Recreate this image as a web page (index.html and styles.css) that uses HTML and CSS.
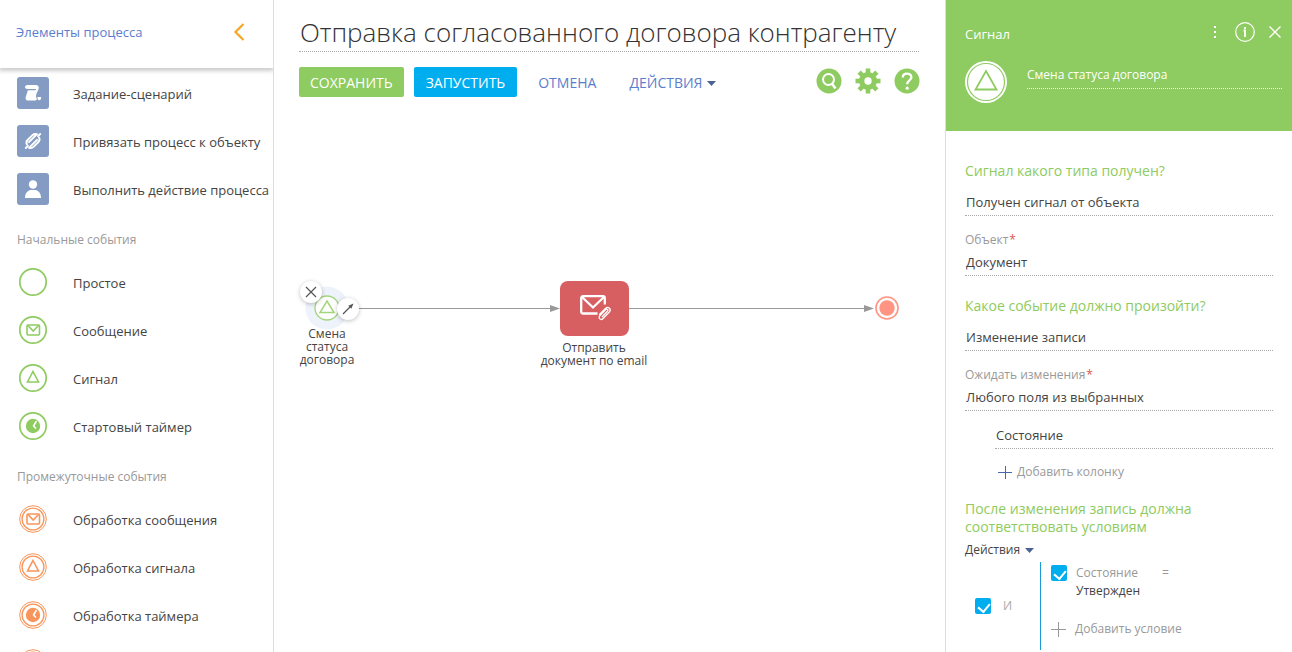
FILE: index.html
```html
<!DOCTYPE html>
<html lang="ru">
<head>
<meta charset="utf-8">
<title>Отправка согласованного договора контрагенту</title>
<link rel="stylesheet" href="styles.css">
</head>
<body>
<svg class="defs" aria-hidden="true">
  <symbol id="ring" viewBox="0 0 32 32"><circle cx="16" cy="16" r="13.200" fill="none" stroke="currentColor" stroke-width="1.700"/></symbol>
  <symbol id="ring2" viewBox="0 0 32 32"><g fill="none" stroke="currentColor"><circle cx="16" cy="16" r="13.300" stroke-width="1"/><circle cx="16" cy="16" r="10.900" stroke-width="1.300"/></g></symbol>
  <symbol id="mail" viewBox="0 0 32 32"><g fill="none" stroke="currentColor" stroke-width="1.600"><rect x="10" y="11" width="12.500" height="10" rx="1"/><path d="M11 11.500l5.200 5.500 5.300-5.500"/></g></symbol>
  <symbol id="tri" viewBox="0 0 32 32"><path d="M16 9.500L21.500 20h-11z" fill="none" stroke="currentColor" stroke-width="1.600"/></symbol>
  <symbol id="clock" viewBox="0 0 32 32"><circle cx="16" cy="16" r="7.200" fill="currentColor"/><path d="M19.500 11L16.500 16l2.500 2.500" fill="none" stroke="#fff" stroke-width="1.500"/></symbol>
</svg>

<div class="app">
  <aside class="sidebar">
    <header class="sidebar-head">
      <h2 class="sidebar-title">Элементы процесса</h2>
      <button class="icon-btn collapse" aria-label="Свернуть">
        <svg width="12" height="20" viewBox="0 0 12 20"><path d="M10.500 2L2.500 10l8 8" fill="none" stroke="#f5a623" stroke-width="2.200"/></svg>
      </button>
    </header>
    <div class="palette">
      <ul class="group">
        <li class="item"><span class="tile"><svg width="32" height="32" viewBox="0 0 32 32"><g fill="#fff"><path d="M10.500 8H19v4h-8.500c-3.300 0-3.300-4 0-4z"/><path d="M18 8c3.300 0 4.500 1.800 3.500 4.200l-1.800 4c-.9 2-.8 3.800 0 5.300.4 1-.2 2-1.500 2h-7c-2.600 0-3-2-2.300-4l2-6.300h7z"/><path d="M20.500 20h3.600c.3 2.200-.7 3.300-2 3.300s-1.800-1.500-1.600-3.300z"/></g><path d="M10.500 12.500H19" stroke="#849cc3" stroke-width="1"/></svg></span><span class="name">Задание-сценарий</span></li>
        <li class="item"><span class="tile"><svg width="32" height="32" viewBox="0 0 32 32"><g fill="none" stroke="#fff" stroke-width="1.900" stroke-linecap="round" stroke-linejoin="round"><path d="M10 19.500c-1.200-2-.4-3.500.6-4.500l4.900-4.900c1.200-1.200 2.500-1.500 4.500-.9l-8 8"/><path d="M22 12.500c1.200 2 .4 3.500-.6 4.500l-4.900 4.900c-1.200 1.200-2.500 1.500-4.500.9l8-8"/><path d="M8.800 23l2.200-2.200M23.200 9L21 11.200"/></g></svg></span><span class="name">Привязать процесс к объекту</span></li>
        <li class="item"><span class="tile"><svg width="32" height="32" viewBox="0 0 32 32"><circle cx="16" cy="11.500" r="4.200" fill="#fff"/><path d="M8 25c0-5 2.500-7 5-8h6c2.500 1 5 3 5 8z" fill="#fff"/></svg></span><span class="name">Выполнить действие процесса</span></li>
      </ul>
      <h3 class="group-title">Начальные события</h3>
      <ul class="group start">
        <li class="item"><svg class="event"><use href="#ring"/></svg><span class="name">Простое</span></li>
        <li class="item"><svg class="event"><use href="#ring"/><use href="#mail"/></svg><span class="name">Сообщение</span></li>
        <li class="item"><svg class="event"><use href="#ring"/><use href="#tri"/></svg><span class="name">Сигнал</span></li>
        <li class="item"><svg class="event"><use href="#ring"/><use href="#clock"/></svg><span class="name">Стартовый таймер</span></li>
      </ul>
      <h3 class="group-title">Промежуточные события</h3>
      <ul class="group middle">
        <li class="item"><svg class="event"><use href="#ring2"/><use href="#mail"/></svg><span class="name">Обработка сообщения</span></li>
        <li class="item"><svg class="event"><use href="#ring2"/><use href="#tri"/></svg><span class="name">Обработка сигнала</span></li>
        <li class="item"><svg class="event"><use href="#ring2"/><use href="#clock"/></svg><span class="name">Обработка таймера</span></li>
        <li class="item"><svg class="event"><use href="#ring2"/></svg></li>
      </ul>
    </div>
  </aside>

  <main class="main">
    <input class="title" type="text" aria-label="Название процесса" value="Отправка согласованного договора контрагенту">
    <div class="toolbar">
      <button class="btn save">СОХРАНИТЬ</button>
      <button class="btn run">ЗАПУСТИТЬ</button>
      <button class="btn flat cancel">ОТМЕНА</button>
      <button class="btn flat">ДЕЙСТВИЯ<svg class="caret" width="9" height="5" viewBox="0 0 9 5"><path d="M0 0h9L4.500 5z" fill="#4a6394"/></svg></button>
      <div class="tools">
        <button class="icon-btn" aria-label="Поиск"><svg width="26" height="26" viewBox="0 0 26 26"><circle cx="13" cy="13" r="12.500" fill="#8ecb60"/><circle cx="12.500" cy="11.500" r="5.500" fill="none" stroke="#fff" stroke-width="2"/><path d="M15.500 15l4 5.500" stroke="#fff" stroke-width="2.600"/></svg></button>
        <button class="icon-btn" aria-label="Настройки"><svg width="26" height="26" viewBox="0 0 26 26"><g fill="#8ecb60"><circle cx="13" cy="13" r="9"/><g id="teeth"><rect x="10.700" y="0.500" width="4.600" height="25"/><rect x="0.500" y="10.700" width="25" height="4.600"/></g><use href="#teeth" transform="rotate(45 13 13)"/></g><circle cx="13" cy="13" r="3.700" fill="#fff"/></svg></button>
        <button class="icon-btn" aria-label="Справка"><svg width="26" height="26" viewBox="0 0 26 26"><circle cx="13" cy="13" r="12.500" fill="#8ecb60"/><path d="M8.800 9.500c0-5.200 8.600-5 8.600-.3 0 3.300-4.200 3.200-4.200 7" fill="none" stroke="#fff" stroke-width="2.300"/><circle cx="13.200" cy="20.200" r="1.600" fill="#fff"/></svg></button>
      </div>
    </div>
    <div class="canvas">
      <svg class="flows" aria-hidden="true">
        <g stroke="#999" stroke-width="1"><path d="M84 211.500h193"/><path d="M355 211.500h236"/></g>
        <g fill="#999"><path d="M276 208l10 3.500-10 3.500z"/><path d="M590 208l10 3.500-10 3.500z"/></g>
      </svg>
      <div class="node signal">
        <svg width="44" height="44" viewBox="0 0 44 44"><circle cx="22" cy="22" r="21.500" fill="#eef2fb"/><circle cx="22" cy="22" r="12" fill="#fff" stroke="#a3d57c" stroke-width="1.300"/><path d="M22 15l7 11.500h-14z" fill="none" stroke="#a3d57c" stroke-width="1.500"/></svg>
        <span class="caption">Смена<br>статуса<br>договора</span>
      </div>
      <button class="bubble remove" aria-label="Удалить"><svg width="22" height="22" viewBox="0 0 22 22"><path d="M6 6l10 10M16 6L6 16" stroke="#555" stroke-width="1.200"/></svg></button>
      <button class="bubble link" aria-label="Соединить"><svg width="22" height="22" viewBox="0 0 22 22"><path d="M6 16L13 9" stroke="#555" stroke-width="1.200"/><path d="M16.500 5.500l-2.200 5.200-3-3z" fill="#555"/></svg></button>
      <div class="node task">
        <div class="task-box"><svg width="40" height="34" viewBox="0 0 40 34"><g fill="none" stroke="#fff"><path d="M21.500 22.500H7a1.800 1.800 0 0 1-1.800-1.800V7A1.800 1.800 0 0 1 7 5.200h20a1.800 1.800 0 0 1 1.800 1.800v6.500M6 6l11 10.500L28 6" stroke-width="2.300"/><path d="M26 26l5.500-5.800c1.200-1.200-.5-2.800-1.700-1.600l-6 6.200c-2 2.300 1 5 3.300 2.700l6.200-6.500c2.500-3-1-6-3.600-3.700l-6.500 6.500" stroke-width="1.300"/></g></svg></div>
        <span class="caption">Отправить<br>документ по email</span>
      </div>
      <svg class="node end" width="26" height="26" viewBox="0 0 26 26"><circle cx="13" cy="13" r="11" fill="#fff" stroke="#ff9482" stroke-width="1.600"/><circle cx="13" cy="13" r="7.700" fill="#ff9482"/></svg>
    </div>
  </main>

  <aside class="panel">
    <header class="panel-head">
      <div class="panel-top">
        <h2 class="panel-title">Сигнал</h2>
        <button class="icon-btn" aria-label="Меню"><svg width="4" height="20" viewBox="0 0 4 20"><g fill="#fff"><rect x="1" y="4" width="2" height="2"/><rect x="1" y="9" width="2" height="2"/><rect x="1" y="14" width="2" height="2"/></g></svg></button>
        <button class="icon-btn info" aria-label="Информация"><svg width="20" height="20" viewBox="0 0 20 20"><circle cx="10" cy="10" r="9.300" fill="none" stroke="#fff" stroke-width="1.200"/><path d="M8.500 8.500H10v6.500M10 5v2" fill="none" stroke="#fff" stroke-width="1.800"/></svg></button>
        <button class="icon-btn" aria-label="Закрыть"><svg width="14" height="14" viewBox="0 0 14 14"><path d="M1.500 1.500l11 11M12.500 1.500l-11 11" stroke="#fff" stroke-width="1.300"/></svg></button>
      </div>
      <div class="panel-name">
        <svg width="42" height="42" viewBox="0 0 42 42"><circle cx="21" cy="21" r="21" fill="#fff"/><circle cx="21" cy="21" r="18.500" fill="none" stroke="#8ecb60" stroke-width="1.200"/><path d="M21 10l10.500 18.500h-21z" fill="none" stroke="#8ecb60" stroke-width="1.800"/></svg>
        <input class="name-input" type="text" aria-label="Заголовок" value="Смена статуса договора">
      </div>
    </header>
    <form class="panel-body">
      <label class="question" for="kind">Сигнал какого типа получен?</label>
      <input class="field" id="kind" type="text" value="Получен сигнал от объекта">
      <label class="label" for="object">Объект<span class="req">*</span></label>
      <input class="field" id="object" type="text" value="Документ">
      <label class="question next" for="event">Какое событие должно произойти?</label>
      <input class="field" id="event" type="text" value="Изменение записи">
      <label class="label" for="wait">Ожидать изменения<span class="req">*</span></label>
      <input class="field" id="wait" type="text" value="Любого поля из выбранных">
      <div class="columns">
        <input class="field" type="text" aria-label="Колонка" value="Состояние">
        <button class="add" type="button"><svg width="14" height="14" viewBox="0 0 14 14"><path d="M0 7.500h14M7.500 1v13" stroke="#4a66ad" stroke-width="1"/></svg>Добавить колонку</button>
      </div>
      <h3 class="question filter-title">После изменения запись должна соответствовать условиям</h3>
      <button class="filter-actions" type="button">Действия<svg class="caret" width="9" height="5" viewBox="0 0 9 5"><path d="M0 0h9L4.500 5z" fill="#4a6394"/></svg></button>
      <div class="filter">
        <label class="logic"><input class="check" type="checkbox" checked>И</label>
        <div class="conditions">
          <div class="condition">
            <input class="check" id="cond" type="checkbox" checked>
            <label class="cond-text" for="cond"><span class="cond-col">Состояние</span><span class="cond-op">=</span><span class="cond-value">Утвержден</span></label>
          </div>
          <button class="add add-cond" type="button"><svg width="15" height="15" viewBox="0 0 15 15"><path d="M0 7.500h15M7.500 0v15" stroke="#999" stroke-width="1"/></svg>Добавить условие</button>
        </div>
      </div>
    </form>
  </aside>
</div>
</body>
</html>
```

FILE: styles.css
```css
* { box-sizing: border-box; }
body, h2, h3, ul { margin: 0; padding: 0; }
body { font: 13px/18px "Open Sans", "Noto Sans", sans-serif; color: #444; background: #fff; }
h2, h3 { font-weight: 400; }
ul { list-style: none; }
svg { display: block; flex: none; }
button, input { font: inherit; color: inherit; background: none; border: 0; border-radius: 0; padding: 0; margin: 0; outline: 0; min-width: 0; }
button { cursor: pointer; }
.defs { position: absolute; width: 0; height: 0; }

.app { display: grid; grid-template-columns: 274px minmax(0, 1fr) 347px; height: 100vh; overflow: hidden; }

/* Element palette */
.sidebar { display: flex; flex-direction: column; border-right: 1px solid #ddd; min-height: 0; overflow: hidden; }
.sidebar-head { display: flex; align-items: center; justify-content: space-between; flex: none; height: 68px; padding: 0 28px 4px 16px; margin-bottom: 1px; box-shadow: 0 2px 4px 1px rgba(0, 0, 0, .2); }
.sidebar-title { font-size: 13px; color: #5c7dcc; }
.palette { flex: 1; min-height: 0; overflow: hidden; white-space: nowrap; }
.item { display: flex; align-items: center; gap: 24px; height: 48px; padding: 0 0 0 17px; }
.name { padding-top: 2px; }
.tile { width: 32px; height: 32px; border-radius: 3px; background: #849cc3; }
.event { width: 32px; height: 32px; }
.start .event { color: #8ecb60; }
.middle .event { color: #f8955a; }
.group-title { padding: 18px 17px 9px; font-size: 12px; color: #999; }

/* Designer */
.main { display: flex; flex-direction: column; min-height: 0; overflow: hidden; }
.title { height: 40px; margin: 12px 26px 0 25px; padding-left: 1px; font-size: 26px; font-weight: 300; color: #333; border-bottom: 1px dotted #aaa; }
.toolbar { display: flex; align-items: center; height: 30px; margin: 15px 25px 0 25px; font-size: 14px; flex: none; }
.btn { display: flex; align-items: center; height: 30px; padding-top: 2px; white-space: nowrap; }
.save, .run { padding: 2px 11px 0; border-radius: 2px; color: #fff; }
.save { background: #8ecb60; margin-right: 10px; }
.run { background: #00aeef; padding: 2px 12px 0; }
.flat { color: #5c7dcc; }
.cancel { margin: 0 33px 0 21px; }
.caret { margin-left: 5px; }
.tools { display: flex; gap: 13px; margin-left: auto; padding-bottom: 2px; }
.canvas { position: relative; flex: 1; min-height: 0; font-size: 12px; line-height: 13px; text-align: center; }
.flows { position: absolute; left: 0; top: 0; width: 100%; height: 100%; }
.node { position: absolute; }
.caption { display: block; white-space: nowrap; }
.signal { left: 13px; top: 189px; width: 80px; }
.signal svg { margin: 0 auto; }
.signal .caption { margin-top: -3px; }
.bubble { position: absolute; width: 22px; height: 22px; border-radius: 50%; background: #fff; box-shadow: 0 1px 4px rgba(0, 0, 0, .25); }
.remove { left: 26px; top: 184px; }
.link { left: 63px; top: 201px; }
.task { left: 260px; top: 184px; width: 120px; }
.task-box { width: 69px; height: 55px; margin: 0 auto 5px; padding: 10px 0 0 16px; border-radius: 8px; background: #d85f61; }
.end { left: 600px; top: 198px; }

/* Element properties */
.panel { border-left: 1px solid #ddd; min-height: 0; overflow: hidden; }
.panel-head { height: 131px; padding: 22px 10px 0 19px; background: #8ecb60; color: #fff; }
.panel-top { display: flex; align-items: center; height: 20px; }
.panel-title { flex: 1; font-size: 13px; padding-top: 4px; }
.info { margin: 0 13px 0 18px; }
.panel-name { display: flex; gap: 20px; margin-top: 19px; }
.name-input { flex: 1; height: 28px; padding-bottom: 1px; font-size: 12px; border-bottom: 1px dotted #fff; }
.panel-body { display: flex; flex-direction: column; padding: 31px 19px 0; }
.question { font-size: 14px; color: #8ecb60; }
.question.next { margin-top: 21px; }
.field { height: 26px; padding: 0 1px 2px; border-bottom: 1px dotted #aaa; }
.question + .field { margin-top: 10px; }
.label { margin: 15px 0 1px; font-size: 12px; color: #999; }
.req { margin-left: 1px; color: #e0564f; }
.columns { display: flex; flex-direction: column; align-items: stretch; margin: 12px 0 0 30px; }
.add { display: flex; align-items: center; gap: 5px; font-size: 12px; color: #999; }
.columns .add { margin: 14px 0 0 3px; align-self: flex-start; }
.filter-title { margin-top: 19px; }
.filter-actions { display: flex; align-items: center; align-self: flex-start; margin-top: 5px; font-size: 12px; }
.filter { display: grid; grid-template-columns: 75px 1fr; margin-top: 3px; font-size: 12px; }
.logic { display: flex; align-items: center; gap: 12px; padding-left: 10px; color: #aaa; }
.check { appearance: none; flex: none; width: 16px; height: 16px; border-radius: 2px; background: #00aeef; position: relative; }
.check:checked::after { content: ""; position: absolute; left: 5px; top: 3px; width: 6px; height: 9px; border: solid #fff; border-width: 0 2px 2px 0; transform: rotate(40deg); }
.conditions { border-left: 1px solid #1a9ad6; padding: 2px 0 12px 10px; }
.condition { display: flex; gap: 9px; }
.condition .check { margin-top: 1px; }
.cond-text { display: grid; grid-template-columns: 86px 1fr; color: #999; }
.cond-value { grid-column: 1 / -1; color: #444; }
.add-cond { margin-top: 20px; gap: 9px; }
```
